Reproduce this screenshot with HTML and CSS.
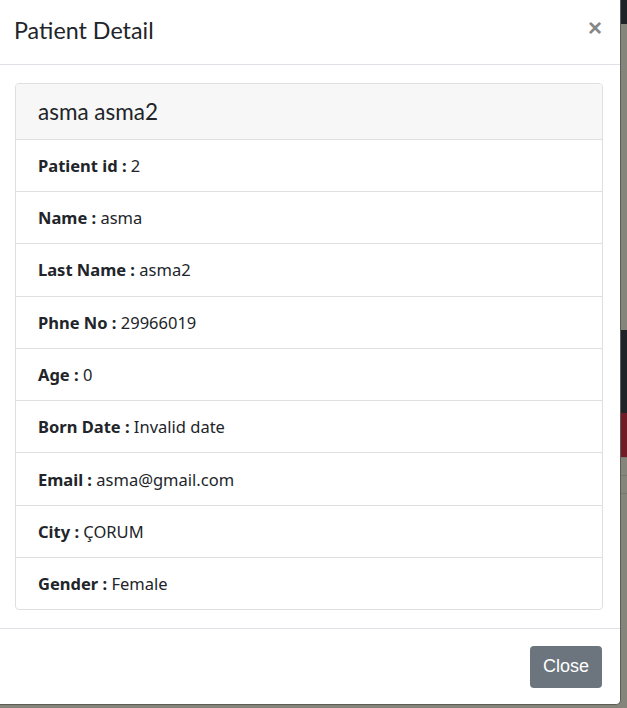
FILE: index.html
```html
<!DOCTYPE html>
<html>
<head>
<meta charset="utf-8">
<link rel="stylesheet" href="styles.css">
</head>
<body>
<div class="stage">
  <div class="modal">
    <div class="modal-header">
      <h5 class="modal-title">Patient Detail</h5>
      <button class="close" type="button">×</button>
    </div>
    <div class="modal-body">
      <div class="card">
        <div class="card-header">asma asma2</div>
        <ul class="list">
          <li class="item"><b>Patient id :</b> 2</li>
          <li class="item"><b>Name :</b> asma</li>
          <li class="item"><b>Last Name :</b> asma2</li>
          <li class="item"><b>Phne No :</b> 29966019</li>
          <li class="item"><b>Age :</b> 0</li>
          <li class="item"><b>Born Date :</b> Invalid date</li>
          <li class="item"><b>Email :</b> asma@gmail.com</li>
          <li class="item"><b>City :</b> ÇORUM</li>
          <li class="item"><b>Gender :</b> Female</li>
        </ul>
      </div>
    </div>
    <div class="modal-footer">
      <button class="btn" type="button">Close</button>
    </div>
  </div>
  <div class="strip">
    <div class="seg seg-dark1"></div>
    <div class="seg seg-gray1"></div>
    <div class="seg seg-dark2"></div>
    <div class="seg seg-red"></div>
    <div class="seg seg-line"></div>
    <div class="seg seg-line"></div>
    <div class="seg seg-line"></div>
    <div class="seg seg-rest"></div>
  </div>
</div>
</body>
</html>
```

FILE: styles.css
```css
html, body {
  margin: 0;
  padding: 0;
}
body {
  background: #85857c;
  width: 627px;
  height: 708px;
  overflow: hidden;
  font-family: "Noto Sans", "Open Sans", sans-serif;
  color: #212529;
}
.stage {
  display: flex;
  height: 708px;
  align-items: flex-start;
}
.modal {
  width: 620px;
  height: 704px;
  flex: none;
  background: #fff;
  border-right: 1px solid #5d5d57;
  border-bottom: 1px solid #5d5d57;
  border-bottom-right-radius: 5px;
  display: flex;
  flex-direction: column;
}
.modal-header {
  height: 65px;
  box-sizing: border-box;
  border-bottom: 1px solid #dee2e6;
  display: flex;
  align-items: center;
  padding: 0 18px 0 14px;
}
.modal-title {
  margin: 0;
  font-family: Lato, sans-serif;
  font-weight: 400;
  font-size: 23.3px;
  color: #212529;
  flex: 1;
  padding-bottom: 4px;
}
.close {
  border: 0;
  background: none;
  padding: 0;
  font-family: "Liberation Sans", Arial, sans-serif;
  font-weight: 700;
  font-size: 24px;
  line-height: 1;
  color: #878787;
  margin-bottom: 8px;
}
.modal-body {
  padding: 18px 17px 18px 15px;
}
.card {
  border: 1px solid #dfdfdf;
  border-radius: 4px;
  overflow: hidden;
}
.card-header {
  background: #f7f7f7;
  border-bottom: 1px solid #dfdfdf;
  height: 56px;
  box-sizing: border-box;
  padding: 0 22px;
  display: flex;
  align-items: center;
  font-family: Lato, sans-serif;
  font-size: 22.5px;
  font-weight: 400;
  color: #212529;
}
.list {
  list-style: none;
  margin: 0;
  padding: 0;
}
.item {
  height: 52.3px;
  box-sizing: border-box;
  display: flex;
  align-items: center;
  padding: 0 22px;
  font-size: 16.5px;
  border-top: 1px solid #dfdfdf;
  white-space: pre;
}
.item:first-child {
  border-top: 0;
  height: 51.3px;
}
.item b {
  font-weight: 700;
}
.modal-footer {
  margin-top: auto;
  border-top: 1px solid #dee2e6;
  height: 76px;
  box-sizing: border-box;
  display: flex;
  align-items: center;
  justify-content: flex-end;
  padding: 0 18px;
}
.btn {
  width: 72px;
  height: 42px;
  border: 0;
  border-radius: 4px;
  background: #6c757d;
  color: #fff;
  font-family: "Liberation Sans", Arial, sans-serif;
  font-size: 18px;
  padding: 0;
}
.strip {
  flex: 1;
  display: flex;
  flex-direction: column;
  height: 708px;
}
.seg-dark1 { height: 24px; background: #1d2327; }
.seg-gray1 { height: 306px; background: #85857c; }
.seg-dark2 { height: 83px; background: #1e2427; }
.seg-red { height: 44px; background: #711b27; }
.seg-line { height: 18px; background: #85857c; border-top: 1px solid #77776f; box-sizing: border-box; }
.seg-rest { flex: 1; background: #85857c; }
```
